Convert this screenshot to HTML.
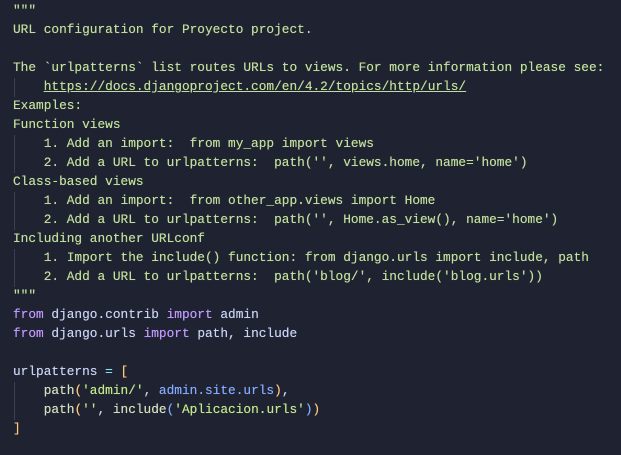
<!DOCTYPE html>
<html><head><style>
html,body{margin:0;padding:0;background:#1f2230;width:621px;height:455px;overflow:hidden}
pre{margin:0;position:absolute;left:13px;top:1px;font-family:"Liberation Mono",monospace;font-size:12.8px;line-height:19px;color:#c0df9c;white-space:pre;text-shadow:0 0 0.4px currentColor}
.k{color:#c099ff}.i{color:#c8d3f5}.p{color:#ffc777}.o{color:#86e1fc}.b{color:#82aaff}.s{color:#c3e88d}.f{color:#d4e0c0}
.u{text-decoration:underline}
.g{position:absolute;left:14px;width:1px;background:#3b3f55}
</style></head><body>
<div class="g" style="top:78px;height:19px"></div>
<div class="g" style="top:135px;height:38px"></div>
<div class="g" style="top:192px;height:38px"></div>
<div class="g" style="top:249px;height:38px"></div>
<div class="g" style="top:382px;height:38px"></div>
<pre>"""
URL configuration for Proyecto project.

The `urlpatterns` list routes URLs to views. For more information please see:
    <span class="u">https://docs.djangoproject.com/en/4.2/topics/http/urls/</span>
Examples:
Function views
    1. Add an import:  from my_app import views
    2. Add a URL to urlpatterns:  path('', views.home, name='home')
Class-based views
    1. Add an import:  from other_app.views import Home
    2. Add a URL to urlpatterns:  path('', Home.as_view(), name='home')
Including another URLconf
    1. Import the include() function: from django.urls import include, path
    2. Add a URL to urlpatterns:  path('blog/', include('blog.urls'))
"""
<span class="k">from</span><span class="i"> django.contrib </span><span class="k">import</span><span class="i"> admin</span>
<span class="k">from</span><span class="i"> django.urls </span><span class="k">import</span><span class="i"> path, include</span>

<span class="i">urlpatterns </span><span class="o">=</span> <span class="p">[</span>
    <span class="f">path</span><span class="p">(</span><span class="s">'admin/'</span><span class="i">, </span><span class="b">admin.site.urls</span><span class="p">)</span><span class="i">,</span>
    <span class="f">path</span><span class="p">(</span><span class="s">''</span><span class="i">, </span><span class="f">include</span><span class="b">(</span><span class="s">'Aplicacion.urls'</span><span class="b">)</span><span class="p">)</span>
<span class="p">]</span></pre>
</body></html>
